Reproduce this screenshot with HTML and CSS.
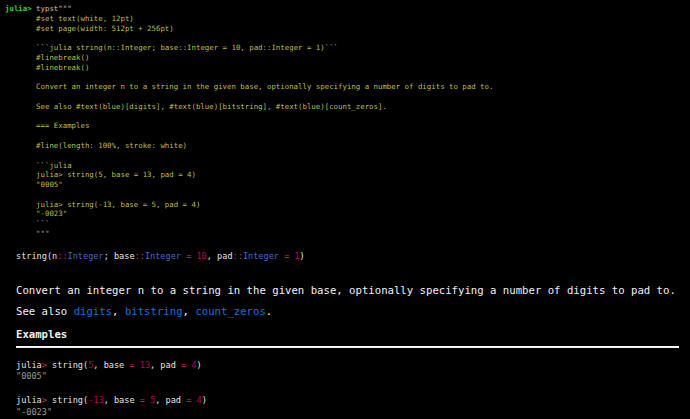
FILE: index.html
```html
<!DOCTYPE html>
<html>
<head>
<meta charset="utf-8">
<link rel="stylesheet" href="styles.css">
</head>
<body>
<pre class="term"><span class="prompt">julia&gt;</span> <span class="cmd">typst"""</span>
       #set text(white, 12pt)
       #set page(width: 512pt + 256pt)

       <span class="tick">```</span>julia string(n::Integer; base::Integer = 10, pad::Integer = 1)<span class="tick">```</span>
       #linebreak()
       #linebreak()

       Convert an integer n to a string in the given base, optionally specifying a number of digits to pad to.

       See also #text(blue)[digits], #text(blue)[bitstring], #text(blue)[count_zeros].

       === Examples

       #line(length: 100%, stroke: white)

       <span class="tick">```</span>julia
       julia&gt; string(5, base = 13, pad = 4)
       "0005"

       julia&gt; string(-13, base = 5, pad = 4)
       "-0023"
       <span class="tick">```</span>
       <span class="tick">"""</span></pre>
<div class="doc">
  <pre class="sig">string(n<span class="op">::</span><span class="ty">Integer</span>; base<span class="op">::</span><span class="ty">Integer</span> <span class="op">=</span> <span class="num">10</span>, pad<span class="op">::</span><span class="ty">Integer</span> <span class="op">=</span> <span class="num">1</span>)</pre>
  <p class="para first">Convert an integer n to a string in the given base, optionally specifying a number of digits to pad to.</p>
  <p class="para">See also <span class="link">digits</span>, <span class="link">bitstring</span>, <span class="link">count_zeros</span>.</p>
  <h3 class="heading">Examples</h3>
  <div class="rule"></div>
  <pre class="code">julia<span class="op">&gt;</span> string(<span class="num">5</span>, base <span class="op">=</span> <span class="num">13</span>, pad <span class="op">=</span> <span class="num">4</span>)
<span class="out">"0005"</span>

julia<span class="op">&gt;</span> string(<span class="num">-13</span>, base <span class="op">=</span> <span class="num">5</span>, pad <span class="op">=</span> <span class="num">4</span>)
<span class="out">"-0023"</span></pre>
</div>
</body>
</html>
```
FILE: styles.css
```css
html, body {
  margin: 0;
  padding: 0;
  background: #000;
  height: 100%;
  overflow: hidden;
}

.term {
  margin: 0;
  padding: 4px 0 0 5px;
  font-family: "DejaVu Sans Mono", monospace;
  font-size: 7.39px;
  line-height: 9.78px;
  color: #bfbf3e;
}

.prompt {
  color: #3ccf3c;
  font-weight: bold;
}

.cmd {
  color: #c4c4c4;
}

.tick {
  color: #a8a890;
}

.doc {
  padding: 0 11px 0 16px;
  color: #f2f2f2;
  font-family: "DejaVu Sans Mono", monospace;
}

.sig {
  margin: 11px 0 0 0;
  font-family: "DejaVu Sans Mono", monospace;
  font-size: 8.57px;
  line-height: 12px;
  color: #e6e6e6;
}

.op { color: #c8385a; }
.ty { color: #4b69c6; }
.num { color: #b60157; }
.out { color: #9a9a9a; }

.para {
  margin: 0;
  font-size: 10.65px;
  line-height: 21px;
}

.para.first {
  margin-top: 18px;
}

.link {
  color: #0a74d9;
}

.heading {
  margin: 2px 0 0 0;
  font-size: 10.65px;
  line-height: 21px;
  font-weight: bold;
}

.rule {
  height: 2px;
  background: #f4f4f4;
  margin-top: 1px;
}

.code {
  margin: 12px 0 0 0;
  font-family: "DejaVu Sans Mono", monospace;
  font-size: 8.57px;
  line-height: 11.7px;
  color: #e6e6e6;
}
```
